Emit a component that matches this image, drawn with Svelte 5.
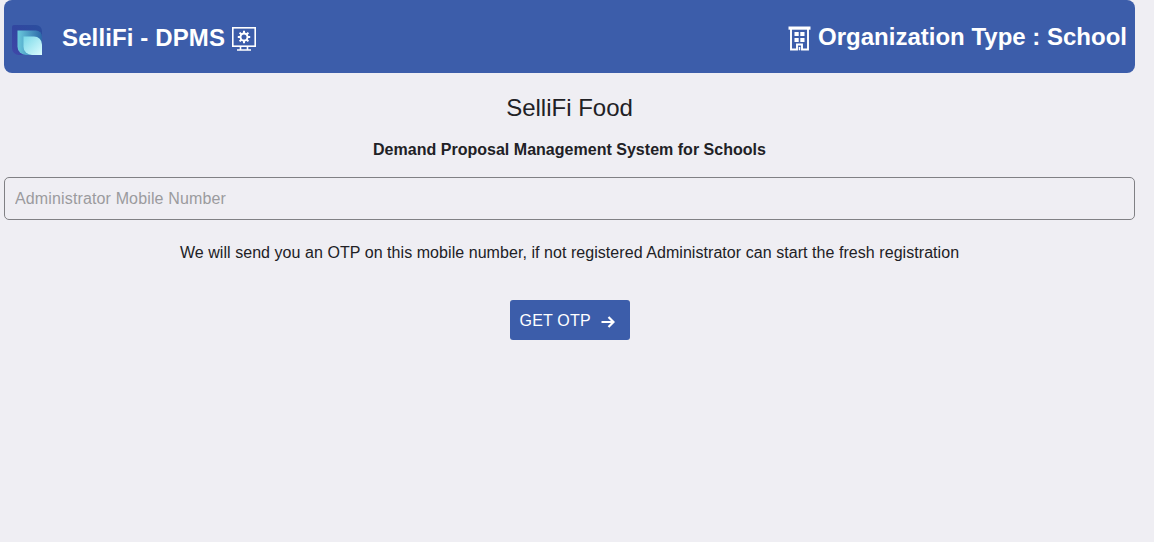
<script lang="ts">
let mobileNumber = $state('')

const organizationType = 'School'
</script>

<main class="page">
  <header class="toolbar">
    <div class="brand">
      <svg class="logo" viewBox="0 0 30 30" aria-hidden="true">
        <defs>
          <linearGradient id="logo-back" x1="0" y1="1" x2="1" y2="0">
            <stop offset="0" stop-color="#4047a8" />
            <stop offset="0.5" stop-color="#3246a0" />
            <stop offset="1" stop-color="#2a4f9e" />
          </linearGradient>
          <linearGradient id="logo-middle" x1="0" y1="0" x2="1" y2="0">
            <stop offset="0" stop-color="#69c9dc" />
            <stop offset="1" stop-color="#2c68a8" />
          </linearGradient>
          <linearGradient id="logo-front" x1="0" y1="0" x2="1" y2="1">
            <stop offset="0" stop-color="#79d8e7" />
            <stop offset="1" stop-color="#dcfcff" />
          </linearGradient>
        </defs>
        <path d="M2 0h22a6 6 0 0 1 6 6v24H7a7 7 0 0 1-7-7V2a2 2 0 0 1 2-2z" fill="url(#logo-back)" />
        <path d="M5.500 5.500H24a6 6 0 0 1 6 6V30H14a8.500 8.500 0 0 1-8.500-8.500z" fill="url(#logo-middle)" />
        <path d="M11.500 11.500H22a8 8 0 0 1 8 8V30H20a8.500 8.500 0 0 1-8.500-8.500z" fill="url(#logo-front)" />
      </svg>
      <h1 class="title">SelliFi - DPMS</h1>
      <svg class="monitor" viewBox="0 0 24 24" fill="none" stroke="#fff" stroke-width="1.600" aria-hidden="true">
        <rect x="0.800" y="0.800" width="22.400" height="18.400" />
        <path d="M8.500 19.200v3.500M15.500 19.200v3.500M5 23h14" />
        <circle cx="12" cy="10" r="3.500" stroke-width="1.900" />
        <path d="M12 3.800v2.700M12 13.500v2.700M5.800 10h2.700M15.500 10h2.700M7.600 5.600l1.900 1.900M14.500 12.500l1.900 1.900M7.600 14.400l1.900-1.900M14.500 7.500l1.900-1.900" stroke-width="2" />
      </svg>
    </div>

    <div class="organization">
      <svg class="building" viewBox="0 0 23 25" fill="none" stroke="#fff" aria-hidden="true">
        <path d="M0.500 0.500h22v3.200H0.500z" fill="#fff" stroke="none" />
        <path d="M3 3v20.500h6v-5h5v5h6V3" stroke-width="1.900" />
        <path d="M11.500 21v3.300" stroke-width="1.500" />
        <path d="M6.500 6h4.200v4H6.500zM12.300 6h4.200v4h-4.200zM6.500 12h4.200v4H6.500zM12.300 12h4.200v4h-4.200z" fill="#fff" stroke="none" />
      </svg>
      <h2 class="title">Organization Type : {organizationType}</h2>
    </div>
  </header>

  <section class="registration">
    <h2 class="product">SelliFi Food</h2>
    <p class="subtitle">Demand Proposal Management System for Schools</p>
    <input
      class="mobile"
      type="tel"
      placeholder="Administrator Mobile Number"
      aria-label="Administrator Mobile Number"
      bind:value={mobileNumber}
    />
    <p class="hint">
      We will send you an OTP on this mobile number, if not registered Administrator can start the fresh registration
    </p>
    <button class="submit" type="button">
      <span class="submit-label">GET OTP</span>
      <svg class="arrow" viewBox="0 0 14 12" aria-hidden="true">
        <path d="M0.500 6h12M7.500 1l5 5-5 5" fill="none" stroke="#fff" stroke-width="2.200" />
      </svg>
    </button>
  </section>
</main>

<style>
  :global(body) {
    background: #efeef3;
  }

  .page {
    box-sizing: border-box;
    min-height: 542px;
    padding: 0 19px 0 4px;
    font-family: Helvetica, 'Liberation Sans', Arial, sans-serif;
    color: #212125;
  }

  .toolbar {
    box-sizing: border-box;
    display: flex;
    align-items: flex-start;
    justify-content: space-between;
    height: 73px;
    padding: 0 8px;
    border-radius: 8px;
    background: #3c5daa;
    color: #fff;
  }

  .brand,
  .organization {
    display: flex;
    align-items: flex-start;
  }

  .logo {
    width: 30px;
    height: 30px;
    margin: 25px 20px 0 0;
  }

  .title {
    margin: 0;
    font-size: 24px;
    font-weight: 700;
    line-height: 28px;
    white-space: nowrap;
  }

  .brand .title {
    margin-top: 24px;
    letter-spacing: 0.12px;
  }

  .organization .title {
    margin-top: 23px;
  }

  .monitor {
    width: 24px;
    height: 24px;
    margin: 27px 0 0 7px;
  }

  .building {
    width: 23px;
    height: 25px;
    margin: 26px 7px 0 0;
  }

  .registration {
    display: flex;
    flex-direction: column;
    align-items: center;
  }

  .product {
    margin: 21px 0 0;
    font-size: 24px;
    font-weight: 400;
    line-height: 28px;
  }

  .subtitle {
    margin: 18px 0 0;
    font-size: 16px;
    font-weight: 700;
    line-height: 20px;
    letter-spacing: 0.02px;
  }

  .mobile {
    box-sizing: border-box;
    width: 100%;
    height: 43px;
    margin: 17px 0 0;
    padding: 0 10px;
    border: 1px solid #808084;
    border-radius: 5px;
    background: transparent;
    color: inherit;
    font: inherit;
    font-size: 16px;
    letter-spacing: 0.14px;
  }

  .mobile::placeholder {
    color: #9b9b9e;
    opacity: 1;
  }

  .hint {
    margin: 23px 0 0;
    font-size: 16px;
    line-height: 20px;
    letter-spacing: 0.055px;
    white-space: nowrap;
  }

  .submit {
    box-sizing: border-box;
    display: flex;
    align-items: center;
    width: 120px;
    height: 40px;
    margin: 37px 0 0;
    padding: 0 10px;
    border: 0;
    border-radius: 3px;
    background: #3c5daa;
    color: #fff;
    font: inherit;
    font-size: 16px;
    cursor: pointer;
  }

  .submit-label {
    padding-top: 2px;
    letter-spacing: 0.2px;
    white-space: nowrap;
  }

  .arrow {
    width: 14px;
    height: 12px;
    margin: 3px 0 0 10px;
  }
</style>
